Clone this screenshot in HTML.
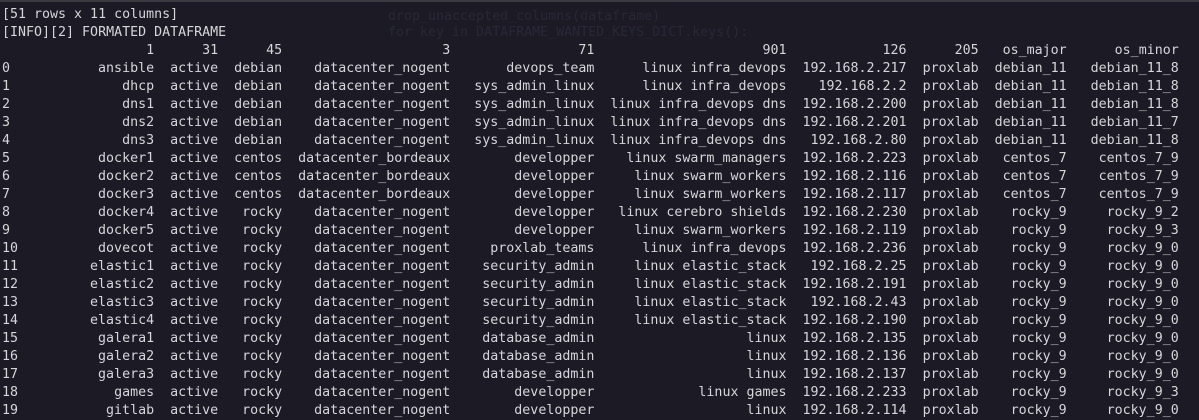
<!DOCTYPE html>
<html><head><meta charset="utf-8"><style>
html,body{margin:0;padding:0;}
body{width:1199px;height:407px;overflow:hidden;background:#1b1a25;position:relative;
font-family:"DejaVu Sans Mono","Liberation Mono",monospace;font-size:13.3px;color:#d6d6d8;}
.top{position:absolute;left:0;top:0;width:1199px;height:2px;background:#3a3a40;}
.wrap{position:absolute;left:2px;top:6px;}
.r{height:18px;line-height:18px;white-space:pre;position:relative;}
.r i{font-style:normal;position:absolute;left:0;top:0;}
.r b{font-weight:normal;display:inline-block;text-align:right;}
.c1{width:19ch}.c2{width:8ch}.c3{width:8ch}.c4{width:21ch}.c5{width:18ch}.c6{width:24ch}.c7{width:15ch}.c8{width:9ch}.c9{width:11ch}.c10{width:14ch}
.bg{position:absolute;color:#292837;white-space:pre;font-size:13.3px;}
</style></head><body>
<div class="top"></div>
<div class="bg" style="left:388px;top:9px">drop_unaccepted_columns(dataframe)</div>
<div class="bg" style="left:388px;top:25px">for key in DATAFRAME_WANTED_KEYS_DICT.keys():</div>
<div class="wrap">
<div class="r">[51 rows x 11 columns]</div>
<div class="r">[INFO][2] FORMATED DATAFRAME</div>
<div class="r"><b class="c1">1</b><b class="c2">31</b><b class="c3">45</b><b class="c4">3</b><b class="c5">71</b><b class="c6">901</b><b class="c7">126</b><b class="c8">205</b><b class="c9">os_major</b><b class="c10">os_minor</b></div>
<div class="r"><i>0</i><b class="c1">ansible</b><b class="c2">active</b><b class="c3">debian</b><b class="c4">datacenter_nogent</b><b class="c5">devops_team</b><b class="c6">linux infra_devops</b><b class="c7">192.168.2.217</b><b class="c8">proxlab</b><b class="c9">debian_11</b><b class="c10">debian_11_8</b></div>
<div class="r"><i>1</i><b class="c1">dhcp</b><b class="c2">active</b><b class="c3">debian</b><b class="c4">datacenter_nogent</b><b class="c5">sys_admin_linux</b><b class="c6">linux infra_devops</b><b class="c7">192.168.2.2</b><b class="c8">proxlab</b><b class="c9">debian_11</b><b class="c10">debian_11_8</b></div>
<div class="r"><i>2</i><b class="c1">dns1</b><b class="c2">active</b><b class="c3">debian</b><b class="c4">datacenter_nogent</b><b class="c5">sys_admin_linux</b><b class="c6">linux infra_devops dns</b><b class="c7">192.168.2.200</b><b class="c8">proxlab</b><b class="c9">debian_11</b><b class="c10">debian_11_8</b></div>
<div class="r"><i>3</i><b class="c1">dns2</b><b class="c2">active</b><b class="c3">debian</b><b class="c4">datacenter_nogent</b><b class="c5">sys_admin_linux</b><b class="c6">linux infra_devops dns</b><b class="c7">192.168.2.201</b><b class="c8">proxlab</b><b class="c9">debian_11</b><b class="c10">debian_11_7</b></div>
<div class="r"><i>4</i><b class="c1">dns3</b><b class="c2">active</b><b class="c3">debian</b><b class="c4">datacenter_nogent</b><b class="c5">sys_admin_linux</b><b class="c6">linux infra_devops dns</b><b class="c7">192.168.2.80</b><b class="c8">proxlab</b><b class="c9">debian_11</b><b class="c10">debian_11_8</b></div>
<div class="r"><i>5</i><b class="c1">docker1</b><b class="c2">active</b><b class="c3">centos</b><b class="c4">datacenter_bordeaux</b><b class="c5">developper</b><b class="c6">linux swarm_managers</b><b class="c7">192.168.2.223</b><b class="c8">proxlab</b><b class="c9">centos_7</b><b class="c10">centos_7_9</b></div>
<div class="r"><i>6</i><b class="c1">docker2</b><b class="c2">active</b><b class="c3">centos</b><b class="c4">datacenter_bordeaux</b><b class="c5">developper</b><b class="c6">linux swarm_workers</b><b class="c7">192.168.2.116</b><b class="c8">proxlab</b><b class="c9">centos_7</b><b class="c10">centos_7_9</b></div>
<div class="r"><i>7</i><b class="c1">docker3</b><b class="c2">active</b><b class="c3">centos</b><b class="c4">datacenter_bordeaux</b><b class="c5">developper</b><b class="c6">linux swarm_workers</b><b class="c7">192.168.2.117</b><b class="c8">proxlab</b><b class="c9">centos_7</b><b class="c10">centos_7_9</b></div>
<div class="r"><i>8</i><b class="c1">docker4</b><b class="c2">active</b><b class="c3">rocky</b><b class="c4">datacenter_nogent</b><b class="c5">developper</b><b class="c6">linux cerebro shields</b><b class="c7">192.168.2.230</b><b class="c8">proxlab</b><b class="c9">rocky_9</b><b class="c10">rocky_9_2</b></div>
<div class="r"><i>9</i><b class="c1">docker5</b><b class="c2">active</b><b class="c3">rocky</b><b class="c4">datacenter_nogent</b><b class="c5">developper</b><b class="c6">linux swarm_workers</b><b class="c7">192.168.2.119</b><b class="c8">proxlab</b><b class="c9">rocky_9</b><b class="c10">rocky_9_3</b></div>
<div class="r"><i>10</i><b class="c1">dovecot</b><b class="c2">active</b><b class="c3">rocky</b><b class="c4">datacenter_nogent</b><b class="c5">proxlab_teams</b><b class="c6">linux infra_devops</b><b class="c7">192.168.2.236</b><b class="c8">proxlab</b><b class="c9">rocky_9</b><b class="c10">rocky_9_0</b></div>
<div class="r"><i>11</i><b class="c1">elastic1</b><b class="c2">active</b><b class="c3">rocky</b><b class="c4">datacenter_nogent</b><b class="c5">security_admin</b><b class="c6">linux elastic_stack</b><b class="c7">192.168.2.25</b><b class="c8">proxlab</b><b class="c9">rocky_9</b><b class="c10">rocky_9_0</b></div>
<div class="r"><i>12</i><b class="c1">elastic2</b><b class="c2">active</b><b class="c3">rocky</b><b class="c4">datacenter_nogent</b><b class="c5">security_admin</b><b class="c6">linux elastic_stack</b><b class="c7">192.168.2.191</b><b class="c8">proxlab</b><b class="c9">rocky_9</b><b class="c10">rocky_9_0</b></div>
<div class="r"><i>13</i><b class="c1">elastic3</b><b class="c2">active</b><b class="c3">rocky</b><b class="c4">datacenter_nogent</b><b class="c5">security_admin</b><b class="c6">linux elastic_stack</b><b class="c7">192.168.2.43</b><b class="c8">proxlab</b><b class="c9">rocky_9</b><b class="c10">rocky_9_0</b></div>
<div class="r"><i>14</i><b class="c1">elastic4</b><b class="c2">active</b><b class="c3">rocky</b><b class="c4">datacenter_nogent</b><b class="c5">security_admin</b><b class="c6">linux elastic_stack</b><b class="c7">192.168.2.190</b><b class="c8">proxlab</b><b class="c9">rocky_9</b><b class="c10">rocky_9_0</b></div>
<div class="r"><i>15</i><b class="c1">galera1</b><b class="c2">active</b><b class="c3">rocky</b><b class="c4">datacenter_nogent</b><b class="c5">database_admin</b><b class="c6">linux</b><b class="c7">192.168.2.135</b><b class="c8">proxlab</b><b class="c9">rocky_9</b><b class="c10">rocky_9_0</b></div>
<div class="r"><i>16</i><b class="c1">galera2</b><b class="c2">active</b><b class="c3">rocky</b><b class="c4">datacenter_nogent</b><b class="c5">database_admin</b><b class="c6">linux</b><b class="c7">192.168.2.136</b><b class="c8">proxlab</b><b class="c9">rocky_9</b><b class="c10">rocky_9_0</b></div>
<div class="r"><i>17</i><b class="c1">galera3</b><b class="c2">active</b><b class="c3">rocky</b><b class="c4">datacenter_nogent</b><b class="c5">database_admin</b><b class="c6">linux</b><b class="c7">192.168.2.137</b><b class="c8">proxlab</b><b class="c9">rocky_9</b><b class="c10">rocky_9_0</b></div>
<div class="r"><i>18</i><b class="c1">games</b><b class="c2">active</b><b class="c3">rocky</b><b class="c4">datacenter_nogent</b><b class="c5">developper</b><b class="c6">linux games</b><b class="c7">192.168.2.233</b><b class="c8">proxlab</b><b class="c9">rocky_9</b><b class="c10">rocky_9_3</b></div>
<div class="r"><i>19</i><b class="c1">gitlab</b><b class="c2">active</b><b class="c3">rocky</b><b class="c4">datacenter_nogent</b><b class="c5">developper</b><b class="c6">linux</b><b class="c7">192.168.2.114</b><b class="c8">proxlab</b><b class="c9">rocky_9</b><b class="c10">rocky_9_0</b></div>
</div>
</body></html>
